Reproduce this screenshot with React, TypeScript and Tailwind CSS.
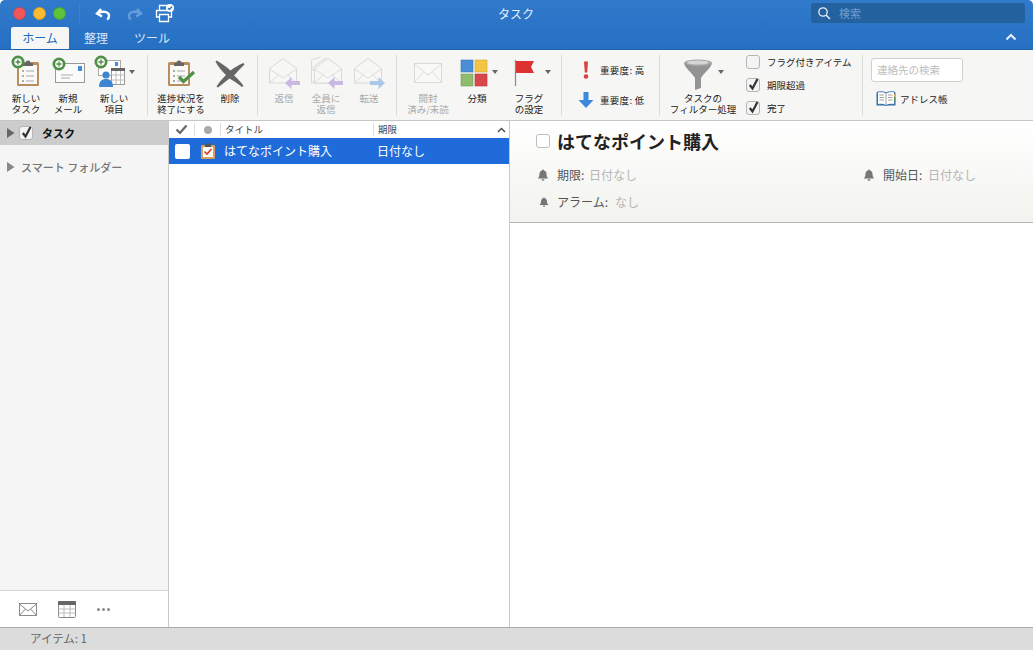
import React from 'react';

// icon svgs use the screenshot's page coordinates in their viewBox
const Caret = ({ x, y }: { x: number; y: number }) => (
  <path d={`M${x - 3} ${y - 2}h6l-3 4z`} fill="#666" />
);

const Plus = ({ x, y }: { x: number; y: number }) => (
  <g>
    <circle cx={x} cy={y} r="6.5" fill="#4f8f46" />
    <circle cx={x} cy={y} r="3.8" fill="#fff" />
    <path d={`M${x - 2.5} ${y}h5M${x} ${y - 2.5}v5`} stroke="#4f8f46" strokeWidth="1.4" />
  </g>
);

const Clipboard = ({ x }: { x: number }) => (
  <g>
    <rect x={x} y="62" width="22" height="24" rx="1.5" fill="#b98d5e" />
    <rect x={x + 2} y="65" width="18" height="19" fill="#fbfaf6" />
    <path d={`M${x + 6} 66v-3h2.5a2.5 2.5 0 0 1 5 0h2.5v3z`} fill="#666" />
    <g fill="#999">
      <circle cx={x + 6} cy="71" r="1.1" />
      <circle cx={x + 6} cy="76" r="1.1" />
      <circle cx={x + 6} cy="81" r="1.1" />
    </g>
    <path d={`M${x + 9} 71h8M${x + 9} 76h8M${x + 9} 81h8`} stroke="#aaa" strokeWidth="1" />
  </g>
);

const NewTaskIcon = () => (
  <svg width="36" height="36" viewBox="8 55 36 36">
    <Clipboard x={17} />
    <Plus x={18} y={62} />
  </svg>
);

const NewMailIcon = () => (
  <svg width="36" height="36" viewBox="50 55 36 36">
    <rect x="55.5" y="63.5" width="29" height="19" fill="#fbfbfb" stroke="#999" />
    <rect x="78" y="66" width="4" height="5" fill="#3f8fdc" />
    <path d="M61 75h12M61 78h9" stroke="#aaa" />
    <Plus x={59} y={64} />
  </svg>
);

const NewItemIcon = () => (
  <svg width="44" height="36" viewBox="92 55 44 36">
    <rect x="98.5" y="60.5" width="22" height="15" fill="#fff" stroke="#aaa" />
    <rect x="115" y="62" width="3" height="4" fill="#3f8fdc" />
    <rect x="111.5" y="69.5" width="13" height="15" fill="#fff" stroke="#999" />
    <rect x="111" y="68" width="14" height="3" fill="#666" />
    <path d="M111.5 75h13M111.5 80h13M116 71v13M120.5 71v13" stroke="#bbb" />
    <circle cx="106" cy="75" r="3.6" fill="#3f86d2" />
    <path d="M99 87c0-6 3-8 7-8s7 2 7 8z" fill="#3f86d2" />
    <Plus x={101} y={62} />
    <Caret x={132} y={72} />
  </svg>
);

const CompleteIcon = () => (
  <svg width="36" height="36" viewBox="163 55 36 36">
    <Clipboard x={168} />
    <path d="M179 77l4.5 4.5L194 72" fill="none" stroke="#4f9148" strokeWidth="3.2" />
  </svg>
);

const DeleteIcon = () => (
  <svg width="36" height="36" viewBox="212 55 36 36">
    <path
      d="M216.500 60.500c5 2.500 10 6.500 14 10c4-3 8-5.500 13-7.500l1 1.500c-3.500 3.500-7 7-10.500 11c3.500 3 7 6.500 9.500 10.500l-1.500 1c-4-3-8-6-12.500-8.500c-4 3-7.500 6-11.500 9l-1.500-1c2.500-4 6-8 9.500-11.500c-4-4-8-8-10.500-13.500z"
      fill="#666"
    />
  </svg>
);

const OpenEnvelope = ({ dx = 0 }: { dx?: number }) => (
  <g transform={`translate(${dx} 0)`}>
    <path d="M269.500 68.500L283 58.500l13.500 10v14.500h-27z" fill="#f7f7f6" stroke="#d9d9d9" />
    <path d="M269.500 69l13.500 9 13.500-9M269.500 83l9-8M296.500 83l-9-8" fill="none" stroke="#dcdcdc" />
  </g>
);

const ReplyIcon = () => (
  <svg width="36" height="36" viewBox="266 55 36 36">
    <OpenEnvelope />
    <path d="M285 83l6.500-6v4h8.500v4h-8.500v4z" fill="#c9b9e2" />
  </svg>
);

const ReplyAllIcon = () => (
  <svg width="36" height="36" viewBox="308 55 36 36">
    <OpenEnvelope dx={42} />
    <path d="M311.500 68V60l9-3" fill="none" stroke="#dcdcdc" />
    <OpenEnvelope dx={45} />
    <path d="M328 83l6.500-6v4h8.500v4h-8.500v4z" fill="#c9b9e2" />
  </svg>
);

const ForwardIcon = () => (
  <svg width="36" height="36" viewBox="351 55 36 36">
    <OpenEnvelope dx={85} />
    <path d="M385 83l-6.500-6v4H370v4h8.500v4z" fill="#a9c8ea" />
  </svg>
);

const ReadIcon = () => (
  <svg width="36" height="36" viewBox="410 55 36 36">
    <rect x="414.500" y="63.500" width="27" height="19" fill="#f9f9f8" stroke="#d9d9d9" />
    <path d="M414.500 64l13.500 11 13.500-11M414.500 82l9-10M441.500 82l-9-10" fill="none" stroke="#dcdcdc" />
  </svg>
);

const CategoryIcon = () => (
  <svg width="44" height="36" viewBox="455 55 44 36">
    <rect x="461" y="60" width="12" height="12" fill="#4a8fd6" stroke="#3b76b5" strokeWidth=".6" />
    <rect x="475" y="60" width="12" height="12" fill="#f4c542" stroke="#d0a52f" strokeWidth=".6" />
    <rect x="461" y="74" width="12" height="12" fill="#8fbc6e" stroke="#74a055" strokeWidth=".6" />
    <rect x="475" y="74" width="12" height="12" fill="#d9474c" stroke="#b63a3e" strokeWidth=".6" />
    <Caret x={495} y={72} />
  </svg>
);

const FlagIcon = () => (
  <svg width="44" height="36" viewBox="507 55 44 36">
    <path d="M515.500 60v26" stroke="#888" strokeWidth="1.2" />
    <path d="M516 61h18l-3 6 3 6h-18z" fill="#dc3232" />
    <Caret x={548} y={72} />
  </svg>
);

const FunnelIcon = () => (
  <svg width="48" height="36" viewBox="679 55 48 36">
    <ellipse cx="698" cy="63" rx="14" ry="3.500" fill="#a6a6a6" />
    <path d="M684 63c1 5 9 11 11 15v12l6-2V78c2-4 10-10 11-15c-4 4-24 4-28 0z" fill="#939393" />
    <ellipse cx="698" cy="62.500" rx="11" ry="2" fill="#d6d6d6" />
    <Caret x={721} y={72} />
  </svg>
);

const Bell = ({ size }: { size: number }) => (
  <svg width={size} height={size} viewBox="0 0 12 12">
    <path d="M6 .5a1 1 0 0 1 1 1c2 .5 2.600 2.200 2.600 4 0 2 .6 2.800 1.400 3.500v.6H1V9c.8-.7 1.400-1.500 1.400-3.500 0-1.800.6-3.500 2.600-4a1 1 0 0 1 1-1z M4.500 10.300h3a1.500 1.500 0 0 1-3 0z" fill="#777" />
  </svg>
);

const Check = ({ checked = true }: { checked?: boolean }) => (
  <span className="w-[14px] h-[14px] rounded-[3px] border border-[#b5b5b5] bg-[#f4f4f4] flex items-center justify-center shrink-0">
    {checked && (
      <svg width="13" height="13" viewBox="0 0 13 13" className="overflow-visible">
        <path d="M2.800 6l2.700 3.500L10.500 0" fill="none" stroke="#333" strokeWidth="2.200" />
      </svg>
    )}
  </span>
);

const RibbonButton = ({
  width,
  icon,
  lines,
  dim,
}: {
  width: string;
  icon: React.ReactNode;
  lines: string[];
  dim?: boolean;
}) => (
  <div className={`${width} flex flex-col items-center pt-[5px] shrink-0`}>
    <div className="h-[36px] flex justify-center">{icon}</div>
    <div className={`mt-[2px] text-[9.5px] leading-[10.5px] text-center whitespace-nowrap ${dim ? 'text-[#a8a8a8]' : 'text-[#222]'}`}>
      {lines[0]}
      {lines[1] && <br />}
      {lines[1]}
    </div>
  </div>
);

const Group = ({ className, children }: { className: string; children: React.ReactNode }) => (
  <div className={`flex shrink-0 h-full relative ${className}`}>
    {children}
    <span className="absolute right-0 top-[5px] bottom-[4px] w-px bg-[#dcdcda]" />
  </div>
);

const App: React.FC = () => {
  return (
    <div className="w-[1033px] h-[650px] flex flex-col overflow-hidden bg-white text-[#222] [font-family:'Noto_Sans_CJK_JP','Liberation_Sans',sans-serif]">
      {/* title bar + tabs */}
      <div className="h-[50px] shrink-0 bg-gradient-to-b from-[#3079cb] to-[#2670c3] border-b border-[#1f62ad] rounded-t-[5px] flex flex-col">
        <div className="h-[27px] flex items-center relative shrink-0">
          <div className="flex items-center gap-[7px] pl-[12.500px]">
            <span className="w-[13px] h-[13px] rounded-full bg-[#f0575a] border border-[#d5484b]" />
            <span className="w-[13px] h-[13px] rounded-full bg-[#fbbb30] border border-[#dd9f22]" />
            <span className="w-[13px] h-[13px] rounded-full bg-[#5dc23c] border border-[#4aa62e]" />
          </div>
          <span className="w-px h-[20px] bg-[#3f80c7] ml-[13px]" />
          <svg width="18" height="14" viewBox="0 0 18 14" className="ml-[15px]">
            <path d="M6 2L2 6.500 7 9.500M3 6c4-2 11-2 11 3 0 1.500-1 3-2 3.500" fill="none" stroke="#fff" strokeWidth="2.400" />
          </svg>
          <svg width="18" height="14" viewBox="0 0 18 14" className="ml-[12px] opacity-40">
            <path d="M12 2l4 4.500-5 3M15 6c-4-2-11-2-11 3 0 1.500 1 3 2 3.500" fill="none" stroke="#bcd6f2" strokeWidth="2.400" />
          </svg>
          <svg width="20" height="19" viewBox="0 0 20 19" className="ml-[12px]">
            <path d="M4.500 6V1.500h8V6M4.500 13H1.500V6.500h15V13h-3M4.500 10.500h9v7h-9z" fill="none" stroke="#fff" strokeWidth="1.300" />
            <circle cx="15" cy="4" r="4" fill="#fff" />
            <path d="M13 4l1.500 1.500L17 2.500" fill="none" stroke="#2670c3" strokeWidth="1.200" />
          </svg>
          <span className="absolute left-[498px] top-[6px] text-[12px] leading-[16px] text-[#e8f1fb]">タスク</span>
          <div className="ml-auto mr-[8px] w-[214px] h-[20px] rounded-[3px] bg-[#24629f] flex items-center pl-[6px] mt-[-1px]">
            <svg width="14" height="14" viewBox="0 0 14 14">
              <circle cx="6" cy="6" r="4.200" fill="none" stroke="#e6eef8" strokeWidth="1.300" />
              <path d="M9 9l4 4" stroke="#e6eef8" strokeWidth="1.500" />
            </svg>
            <span className="ml-[8px] text-[11px] text-[#6f9fd2]">検索</span>
          </div>
        </div>
        <div className="flex items-end h-[22px] pl-[11px] relative">
          <div className="w-[58px] h-[22px] bg-[#f6f6f4] rounded-t-[2px] text-[12px] leading-[21px] text-center text-[#1e6bbd]">ホーム</div>
          <div className="ml-[15px] h-[22px] text-[12px] leading-[21px] text-[#d9e7f7]">整理</div>
          <div className="ml-[26px] h-[22px] text-[12px] leading-[21px] text-[#d9e7f7]">ツール</div>
          <svg width="12" height="8" viewBox="0 0 12 8" className="ml-auto mr-[16px] mb-[8px]">
            <path d="M1.500 6.500L6 2l4.500 4.500" fill="none" stroke="#e8f1fb" strokeWidth="2" />
          </svg>
        </div>
      </div>

      {/* ribbon */}
      <div className="h-[71px] shrink-0 bg-[#f6f6f4] border-b border-[#c6c6c6] flex">
        <Group className="w-[148px] pl-[3px]">
          <RibbonButton width="w-[46px]" icon={<NewTaskIcon />} lines={['新しい', 'タスク']} />
          <RibbonButton width="w-[38px]" icon={<NewMailIcon />} lines={['新規', 'メール']} />
          <RibbonButton width="w-[54px]" icon={<NewItemIcon />} lines={['新しい', '項目']} />
        </Group>
        <Group className="w-[110px] pl-[9px]">
          <RibbonButton width="w-[48px]" icon={<CompleteIcon />} lines={['進捗状況を', '終了にする']} />
          <RibbonButton width="w-[50px]" icon={<DeleteIcon />} lines={['削除']} />
        </Group>
        <Group className="w-[139px] pl-[3px]">
          <RibbonButton width="w-[46px]" icon={<ReplyIcon />} lines={['返信']} dim />
          <RibbonButton width="w-[38px]" icon={<ReplyAllIcon />} lines={['全員に', '返信']} dim />
          <RibbonButton width="w-[48px]" icon={<ForwardIcon />} lines={['転送']} dim />
        </Group>
        <Group className="w-[165px] pl-[8px]">
          <RibbonButton width="w-[46px]" icon={<ReadIcon />} lines={['開封', '済み/未読']} dim />
          <RibbonButton width="w-[52px]" icon={<CategoryIcon />} lines={['分類']} />
          <RibbonButton width="w-[52px]" icon={<FlagIcon />} lines={['フラグ', 'の設定']} />
        </Group>
        <Group className="w-[98px] flex-col pl-[16px] pt-[10px]">
          <div className="flex items-center h-[20px]">
            <svg width="16" height="20" viewBox="0 0 16 20">
              <path d="M6 1.500h4L9.200 12.500H6.800z" fill="#d8423f" />
              <circle cx="8" cy="16.500" r="2.300" fill="#d8423f" />
            </svg>
            <span className="ml-[6px] text-[9.5px] tracking-[0.3px] text-[#222]">重要度: 高</span>
          </div>
          <div className="flex items-center h-[20px] mt-[10px]">
            <svg width="16" height="18" viewBox="0 0 16 18">
              <path d="M5.500 1h5v8h5L8 17 .5 9h5z" fill="#3c88de" />
            </svg>
            <span className="ml-[6px] text-[9.5px] tracking-[0.3px] text-[#222]">重要度: 低</span>
          </div>
        </Group>
        <Group className="w-[203px]">
          <RibbonButton width="w-[86px]" icon={<FunnelIcon />} lines={['タスクの', 'フィルター処理']} />
          <div className="flex flex-col gap-[9px] pt-[5px]">
            <div className="flex items-center h-[14px] gap-[7px] text-[9.5px] text-[#222]"><Check checked={false} />フラグ付きアイテム</div>
            <div className="flex items-center h-[14px] gap-[7px] text-[9.5px] text-[#222]"><Check />期限超過</div>
            <div className="flex items-center h-[14px] gap-[7px] text-[9.5px] text-[#222]"><Check />完了</div>
          </div>
        </Group>
        <div className="flex flex-col pl-[8px] pt-[8px]">
          <div className="w-[92px] h-[24px] rounded-[3px] border border-[#d0d0d0] bg-white pl-[5px] text-[10.500px] leading-[22px] text-[#bdbdbd]">連絡先の検索</div>
          <div className="flex items-center mt-[9px] pl-[5px]">
            <svg width="20" height="17" viewBox="0 0 20 17">
              <path d="M.500 1.500h19v13h-19z" fill="#2f6fb5" />
              <path d="M1.500 1c3-.6 6-.6 8.500 1 2.500-1.600 5.500-1.600 8.500-1v12.500c-3-.5-6-.5-8.500 1-2.500-1.500-5.500-1.500-8.500-1z" fill="#fff" stroke="#2a5d99" strokeWidth=".8" />
              <path d="M10 2v12.500M3.500 4h4.500M3.500 6.500h4.500M3.500 9h4.500M12 4h4.500M12 6.500h4.500M12 9h4.500" stroke="#888" strokeWidth=".8" />
              <path d="M18.800 3v3" stroke="#e8b43c" strokeWidth="1.400" />
              <path d="M18.800 7v3" stroke="#5aa64a" strokeWidth="1.400" />
            </svg>
            <span className="ml-[4px] text-[9.500px] text-[#222]">アドレス帳</span>
          </div>
        </div>
      </div>

      {/* body */}
      <div className="flex-1 min-h-0 flex">
        <aside className="w-[169px] shrink-0 border-r border-[#c8c8c8] bg-[#f5f5f5] flex flex-col">
          <div className="h-[24px] bg-[#cccccc] flex items-center pl-[7px]">
            <svg width="8" height="10" viewBox="0 0 8 10"><path d="M0 0l7.500 5L0 10z" fill="#666" /></svg>
            <span className="ml-[4px]"><Check /></span>
            <span className="ml-[9px] text-[11px] leading-[22px] mb-[1px] font-bold text-[#111]">タスク</span>
          </div>
          <div className="mt-[14px] flex items-center pl-[7px]">
            <svg width="8" height="10" viewBox="0 0 8 10"><path d="M0 0l7.500 5L0 10z" fill="#888" /></svg>
            <span className="ml-[6px] text-[11px] font-medium text-[#777]">スマート フォルダー</span>
          </div>
          <div className="mt-auto h-[37px] bg-white border-t border-[#d4d4d4] flex items-center pl-[19px]">
            <svg width="18" height="14" viewBox="0 0 18 14">
              <rect x=".5" y="1.500" width="17" height="12" fill="#fff" stroke="#8a8a8a" />
              <path d="M.5 2l8.500 7 8.500-7M.5 13.500l6-6.500M17.500 13.500l-6-6.500" fill="none" stroke="#8a8a8a" />
            </svg>
            <svg width="18" height="17" viewBox="0 0 18 17" className="ml-[21px]">
              <rect x=".5" y=".5" width="17" height="16" rx="1" fill="#fff" stroke="#888" />
              <rect x="0" y="0" width="18" height="4" rx="1" fill="#666" />
              <path d="M.5 8h17M.5 12h17M6 4v12M12 4v12" stroke="#bbb" />
            </svg>
            <div className="ml-[21px] flex gap-[2px]">
              <span className="w-[3px] h-[3px] rounded-full bg-[#888]" />
              <span className="w-[3px] h-[3px] rounded-full bg-[#888]" />
              <span className="w-[3px] h-[3px] rounded-full bg-[#888]" />
            </div>
          </div>
        </aside>

        <section className="w-[341px] shrink-0 border-r border-[#c8c8c8] bg-white flex flex-col">
          <div className="h-[17px] flex items-center text-[9.5px] text-[#444]">
            <div className="w-[26px] flex justify-center border-r border-[#ddd] h-[13px] items-center">
              <svg width="13" height="11" viewBox="0 0 13 11"><path d="M1.500 5.500l3.500 3.500L11.500 1.500" fill="none" stroke="#666" strokeWidth="2.200" /></svg>
            </div>
            <div className="w-[26px] flex justify-center border-r border-[#ddd] h-[13px] items-center">
              <span className="w-[8px] h-[8px] rounded-full bg-[#aaa]" />
            </div>
            <div className="w-[153px] pl-[4px] border-r border-[#ddd] h-[13px] leading-[12px]">タイトル</div>
            <div className="pl-[4px] h-[13px] leading-[12px]">期限</div>
            <svg width="9" height="6" viewBox="0 0 9 6" className="ml-auto mr-[3px]"><path d="M1 5l3.500-3.500L8 5" fill="none" stroke="#444" strokeWidth="1.300" /></svg>
          </div>
          <div className="h-[26px] bg-[#1e6bd9] flex items-center text-[12px] text-white">
            <span className="ml-[6px] w-[15px] h-[15px] rounded-[2px] bg-white" />
            <svg width="16" height="16" viewBox="0 0 16 16" className="ml-[10px]">
              <rect x="1" y="2" width="14" height="14" rx="1" fill="#d9a05b" />
              <rect x="3" y="4" width="10" height="10" fill="#fff" />
              <rect x="5" y="0.500" width="6" height="3.500" fill="#555" />
              <path d="M4.500 8.500l2.500 2.500 4.500-5" fill="none" stroke="#d8342c" strokeWidth="1.600" />
            </svg>
            <span className="ml-[8px] w-[153px]">はてなポイント購入</span>
            <span>日付なし</span>
          </div>
        </section>

        <section className="flex-1 min-w-0 bg-white">
          <div className="h-[102px] bg-gradient-to-b from-white to-[#f2f2ee] border-b border-[#b5b5b5] pl-[26px] pt-[8px]">
            <div className="flex items-center h-[24px]">
              <span className="w-[14px] h-[14px] rounded-[3px] border border-[#bdbdbd] bg-white" />
              <span className="ml-[7px] text-[18px] font-bold text-[#222] leading-[24px]">はてなポイント購入</span>
            </div>
            <div className="flex items-center h-[18px] mt-[13px] text-[12px]">
              <span className="ml-[1px]"><Bell size={12} /></span>
              <span className="ml-[8px] text-[#555] w-[32px]">期限:</span>
              <span className="text-[#b5b5b5]">日付なし</span>
              <span className="ml-[226px]"><Bell size={12} /></span>
              <span className="ml-[8px] text-[#555] w-[45px]">開始日:</span>
              <span className="text-[#b5b5b5]">日付なし</span>
            </div>
            <div className="flex items-center h-[18px] mt-[9px] text-[12px]">
              <span className="ml-[3px]"><Bell size={10} /></span>
              <span className="ml-[8px] text-[#555] w-[58px]">アラーム:</span>
              <span className="text-[#b5b5b5]">なし</span>
            </div>
          </div>
        </section>
      </div>

      {/* status bar */}
      <div className="h-[23px] shrink-0 bg-[#dcdcdc] border-t border-[#a8a8a8] pl-[30px] text-[11.500px] leading-[21px] text-[#666]">アイテム: 1</div>
    </div>
  );
};

export default App;
